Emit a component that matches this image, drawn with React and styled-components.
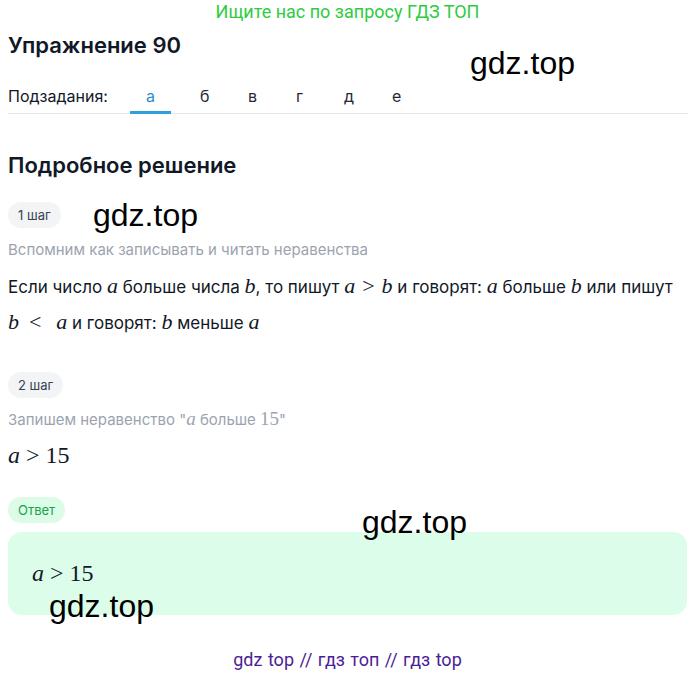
import styled, { createGlobalStyle } from "styled-components";

const Global = createGlobalStyle`
  body {
    margin: 0;
    background: #fff;
    font-family: Inter, "Noto Sans", sans-serif;
    color: #111827;
  }
`;

const Page = styled.div`
  position: relative;
  width: 695px;
  height: 675px;
  padding: 0 8px;
  box-sizing: border-box;
`;

const Banner = styled.div`
  font-family: Roboto, sans-serif;
  font-size: 18px;
  color: #2ecc40;
  text-align: center;
  line-height: 24px;
`;

const Title = styled.h1`
  margin: 7px 0 0;
  font-size: 22px;
  font-weight: 600;
  line-height: 28px;
`;

const TabsRow = styled.div`
  display: flex;
  align-items: stretch;
  margin-top: 27px;
  border-bottom: 1px solid #e5e7eb;
  margin-right: -1px;
`;

const TabsLabel = styled.div`
  font-size: 16px;
  line-height: 20px;
  padding-bottom: 7px;
  width: 122px;
`;

const Tab = styled.div`
  width: ${(p) => (p.$active ? 41 : 48)}px;
  margin-right: ${(p) => (p.$active ? 7 : 0)}px;
  text-align: ${(p) => (p.$active ? "center" : "left")};
  padding-left: ${(p) => (p.$active ? 0 : 22)}px;
  box-sizing: border-box;
  font-size: 16px;
  line-height: 20px;
  padding-bottom: 4px;
  margin-bottom: -1px;
  color: ${(p) => (p.$active ? "#2b8ed1" : "#1f2937")};
  border-bottom: 3px solid ${(p) => (p.$active ? "#2aa3dd" : "transparent")};
`;

const Section = styled.h2`
  margin: 37px 0 0;
  font-size: 22px;
  font-weight: 600;
  line-height: 28px;
`;

const Pill = styled.div`
  display: inline-block;
  height: 26px;
  line-height: 26px;
  padding: 0 10px;
  border-radius: 13px;
  font-size: 13px;
  background: ${(p) => (p.$answer ? "#dcfce7" : "#f3f4f6")};
  color: ${(p) => (p.$answer ? "#16a34a" : "#374151")};
  margin-top: ${(p) => p.$top}px;
  vertical-align: top;
`;

const Note = styled.div`
  font-size: 15px;
  color: #9ca3af;
  line-height: 22px;
  margin-top: 11px;
`;

const Para = styled.p`
  margin: 8px 0 0;
  font-size: 17px;
  line-height: 36px;
`;

const M = styled.span`
  font-family: "Liberation Serif", "DejaVu Serif", serif;
  font-style: ${(p) => (p.$up ? "normal" : "italic")};
  font-size: ${(p) => p.$size || 22}px;
  line-height: 1;
  margin: 0 ${(p) => p.$gap || 0}px;
`;

const Formula = styled.div`
  font-family: "Liberation Serif", serif;
  line-height: 30px;
  margin-top: ${(p) => p.$top || 0}px;
`;

const AnswerBox = styled.div`
  margin-top: 9px;
  background: #dcfde9;
  border-radius: 14px;
  height: 83px;
  padding: 29px 24px 0;
  box-sizing: border-box;
`;

const Footer = styled.div`
  position: absolute;
  left: 0;
  right: 0;
  top: 648px;
  text-align: center;
  font-family: Roboto, sans-serif;
  font-size: 18px;
  line-height: 24px;
  color: #4c1d95;
  word-spacing: 1px;
`;

const Mark = styled.div`
  position: absolute;
  left: ${(p) => p.$x}px;
  top: ${(p) => p.$y}px;
  font-family: "Liberation Sans", Arial, sans-serif;
  font-size: 32px;
  line-height: 36px;
  color: #000;
  pointer-events: none;
`;

const Ineq = ({ size }) => (
  <>
    <M $size={size}>a</M>
    <M $up $size={size} $gap={6}>&gt;</M>
    <M $up $size={size}>15</M>
  </>
);

export default function App() {
  return (
    <>
      <Global />
      <Page>
        <Banner>Ищите нас по запросу ГДЗ ТОП</Banner>
        <Title>Упражнение 90</Title>
        <TabsRow>
          <TabsLabel>Подзадания:</TabsLabel>
          {["а", "б", "в", "г", "д", "е"].map((t, i) => (
            <Tab key={t} $active={i === 0}>{t}</Tab>
          ))}
        </TabsRow>

        <Section>Подробное решение</Section>
        <Pill $top={23}>1 шаг</Pill>
        <Note>Вспомним как записывать и читать неравенства</Note>
        <Para>
          Если число <M>a</M> больше числа <M>b</M>, то пишут <M>a</M>
          <M $up $gap={7}>&gt;</M><M>b</M> и говорят: <M>a</M> больше <M>b</M> или пишут
          <br />
          <M>b</M><M $up $gap={10}>&lt;</M> <M>a</M> и говорят: <M>b</M> меньше <M>a</M>
        </Para>

        <Pill $top={31}>2 шаг</Pill>
        <Note>
          Запишем неравенство "<M $size={19}>a</M> больше <M $up $size={19}>15</M>"
        </Note>
        <Formula $top={12}><Ineq size={24} /></Formula>

        <Pill $answer $top={24}>Ответ</Pill>
        <AnswerBox>
          <Formula><Ineq size={24} /></Formula>
        </AnswerBox>

        <Footer>gdz top // гдз топ // гдз top</Footer>

        <Mark $x={470} $y={45}>gdz.top</Mark>
        <Mark $x={93} $y={197}>gdz.top</Mark>
        <Mark $x={362} $y={504}>gdz.top</Mark>
        <Mark $x={49} $y={588}>gdz.top</Mark>
      </Page>
    </>
  );
}
